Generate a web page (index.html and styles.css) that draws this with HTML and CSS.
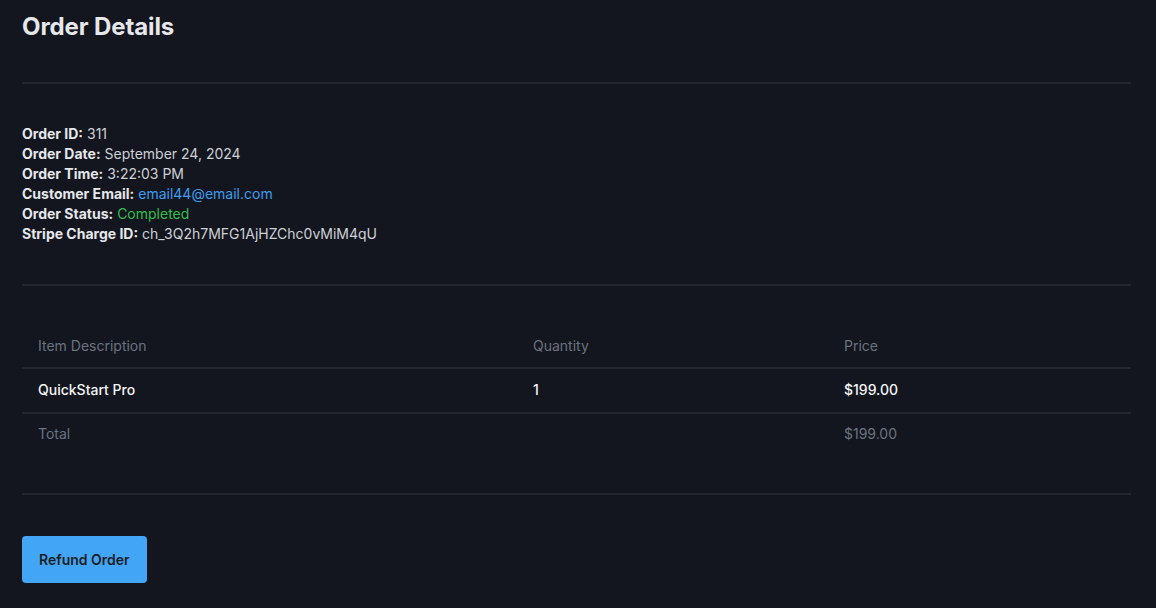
FILE: index.html
```html
<!DOCTYPE html>
<html lang="en">
<head>
    <meta charset="UTF-8">
    <meta name="viewport" content="width=device-width, initial-scale=1.0">
    <title>Order Details</title>
    <link rel="stylesheet" href="styles.css">
</head>
<body>
    <div class="page">
        <h1>Order Details</h1>

        <hr class="divider">

        <!-- Order Info -->
        <div class="order-info">
            <p><strong>Order ID:</strong> 311</p>
            <p><strong>Order Date:</strong> September 24, 2024</p>
            <p><strong>Order Time:</strong> 3:22:03 PM</p>
            <p><strong>Customer Email:</strong> <a href="#" class="email">email44@email.com</a></p>
            <p><strong>Order Status:</strong> <span class="status">Completed</span></p>
            <p><strong>Stripe Charge ID:</strong> ch_3Q2h7MFG1AjHZChc0vMiM4qU</p>
        </div>

        <hr class="divider">

        <!-- Items -->
        <table class="items">
            <thead>
                <tr>
                    <th class="col-desc">Item Description</th>
                    <th class="col-qty">Quantity</th>
                    <th class="col-price">Price</th>
                </tr>
            </thead>
            <tbody>
                <tr>
                    <td>QuickStart Pro</td>
                    <td>1</td>
                    <td>$199.00</td>
                </tr>
            </tbody>
            <tfoot>
                <tr>
                    <td>Total</td>
                    <td></td>
                    <td>$199.00</td>
                </tr>
            </tfoot>
        </table>

        <hr class="divider">

        <button type="button" class="refund-btn">Refund Order</button>
    </div>
</body>
</html>
```

FILE: styles.css
```css
/* General Styles */
body {
    margin: 0;
    padding: 0;
    background-color: #13161e;
    color: #d1d5db;
    font-family: 'Inter', 'Liberation Sans', sans-serif;
    font-size: 14px;
    line-height: 20px;
}

.page {
    padding: 11px 25px 0 22px;
}

h1 {
    margin: 0;
    font-size: 24px;
    line-height: 32px;
    font-weight: 700;
    color: #e5e7eb;
    letter-spacing: -0.1px;
}

.divider {
    border: none;
    border-top: 2px solid #23272f;
    height: 0;
    margin: 39px 0;
}

/* Order Info */
.order-info {
    margin-top: 40px;
    margin-bottom: 40px;
}

.order-info + .divider {
    margin-top: 0;
    margin-bottom: 38px;
}

.order-info p {
    margin: 0;
    color: #cdd0d6;
}

.order-info strong {
    font-weight: 700;
    color: #e5e7eb;
}

.email {
    color: #3d9cf0;
    text-decoration: none;
}

.status {
    color: #2fbf4f;
}

/* Items Table */
.items {
    width: 100%;
    border-collapse: collapse;
}

.items th,
.items td {
    text-align: left;
    padding: 11px 16px 12px;
}

.items th {
    font-weight: 400;
    color: #6b7280;
    padding-top: 12px;
    padding-bottom: 11px;
}

.col-desc { width: 463px; }
.col-qty { width: 279px; }

.items thead tr,
.items tbody tr {
    border-bottom: 2px solid #23272f;
}

.items tbody td {
    color: #f3f4f6;
    font-weight: 500;
}

.items tfoot td {
    color: #6b7280;
    padding-top: 10px;
    padding-bottom: 10px;
}

/* Button */
.refund-btn {
    margin-top: 2px;
    height: 47px;
    padding: 0 17px;
    border: none;
    border-radius: 4px;
    background-color: #42a5f5;
    color: #1a1d24;
    font-family: inherit;
    font-size: 14px;
    font-weight: 600;
    cursor: pointer;
}

.refund-btn:hover {
    background-color: #2f95e8;
}
```
